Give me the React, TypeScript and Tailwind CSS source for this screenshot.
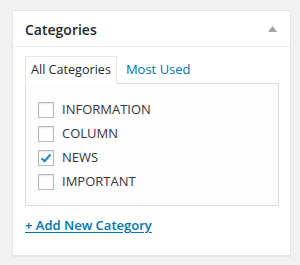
export default function App() {
  const cats = [
    { name: 'INFORMATION', checked: false },
    { name: 'COLUMN', checked: false },
    { name: 'NEWS', checked: true },
    { name: 'IMPORTANT', checked: false },
  ];

  return (
    <div className="w-[300px] h-[265px] bg-[#f1f1f1] pt-[10px] pl-[12px]" style={{ fontFamily: '"Open Sans", sans-serif' }}>
      <div className="w-[279px] h-[246px] bg-white border border-[#e5e5e5] shadow-[0_1px_1px_rgba(0,0,0,0.04)]">
        <div className="h-[36px] border-b border-[#eeeeee] flex items-center justify-between pl-[12px] pr-[13px]">
          <h2 className="text-[14px] font-semibold text-[#23282d] leading-none mt-[2px]">Categories</h2>
          <svg width="9" height="6" viewBox="0 0 9 6" className="mt-[1px]">
            <path d="M4.5 0 L9 6 L0 6 Z" fill="#a0a5aa" />
          </svg>
        </div>
        <div className="px-[12px] pt-[8px]">
          <div className="flex items-end h-[28px]">
            <div className="h-[28px] px-[5px] border border-b-0 border-[#e5e5e5] bg-white flex items-center text-[12.6px] text-[#23282d] relative -mb-px z-10">
              All Categories
            </div>
            <div className="h-[27px] px-[9px] flex items-center text-[13px] text-[#0073aa]">Most Used</div>
          </div>
          <div className="w-[254px] h-[123px] border border-[#dddddd] bg-[#fdfdfd] pt-[14px] pl-[12px]">
            {cats.map((c) => (
              <label key={c.name} className="flex items-center h-[24px]">
                <span className="w-[16px] h-[16px] border border-[#b4b9be] bg-white shadow-[inset_0_1px_2px_rgba(0,0,0,0.1)] flex items-center justify-center">
                  {c.checked && (
                    <svg width="12" height="10" viewBox="0 0 12 10">
                      <path d="M1.5 5.2 L4.6 8.2 L10.5 1.5" fill="none" stroke="#1e8cbe" strokeWidth="2.2" />
                    </svg>
                  )}
                </span>
                <span className="ml-[8px] text-[13px] text-[#32373c]">{c.name}</span>
              </label>
            ))}
          </div>
          <div className="mt-[8px] leading-[20px]">
            <a className="text-[13px] font-semibold text-[#0073aa] underline underline-offset-2">+ Add New Category</a>
          </div>
        </div>
      </div>
    </div>
  );
}
